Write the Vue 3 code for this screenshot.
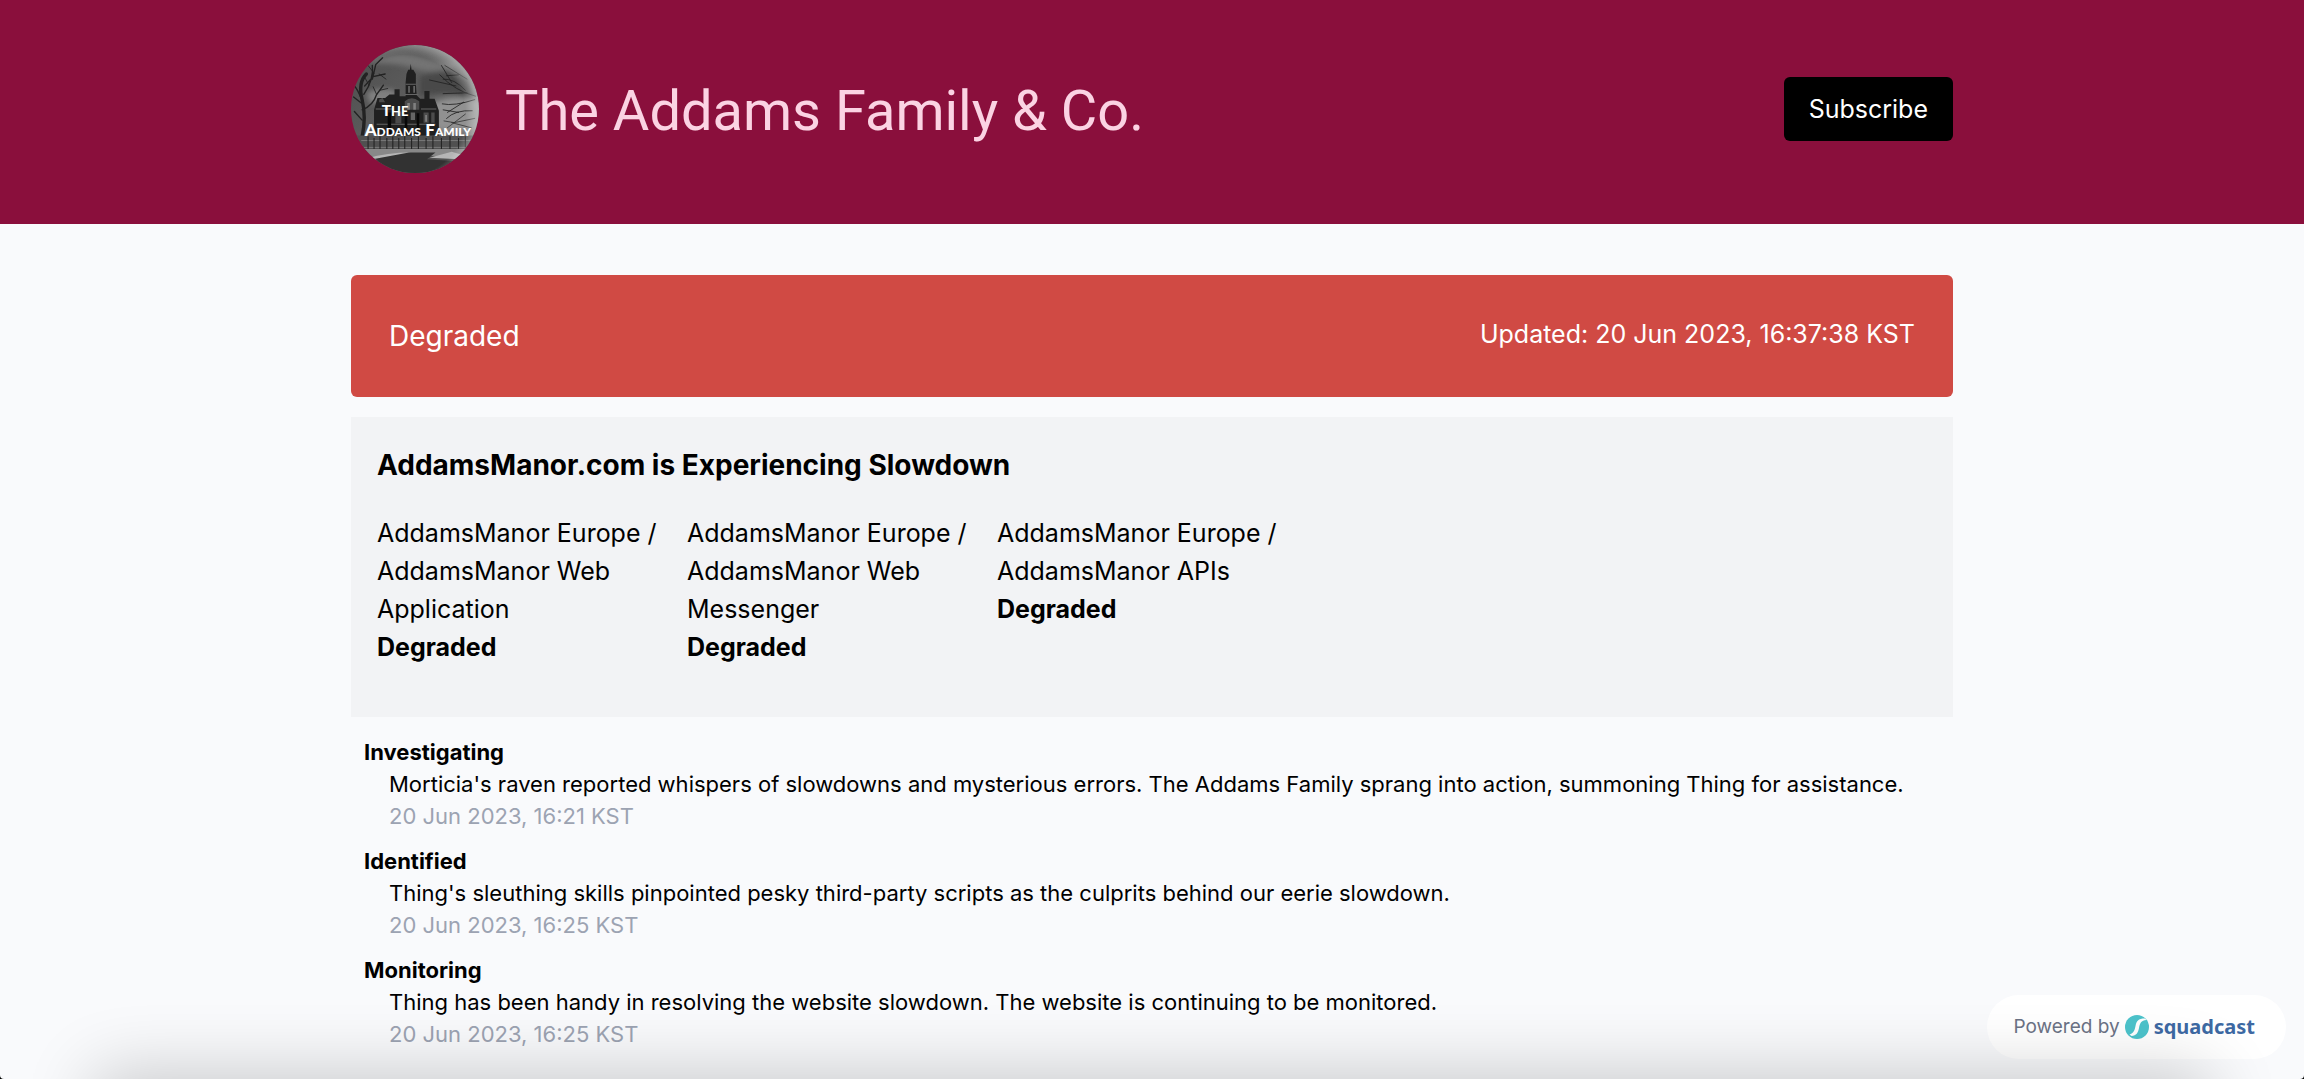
<script setup>
const components = [
  { name: 'AddamsManor Europe / AddamsManor Web Application', status: 'Degraded' },
  { name: 'AddamsManor Europe / AddamsManor Web Messenger', status: 'Degraded' },
  { name: 'AddamsManor Europe / AddamsManor APIs', status: 'Degraded' },
]

const updates = [
  {
    state: 'Investigating',
    text: "Morticia's raven reported whispers of slowdowns and mysterious errors. The Addams Family sprang into action, summoning Thing for assistance.",
    time: '20 Jun 2023, 16:21 KST',
  },
  {
    state: 'Identified',
    text: "Thing's sleuthing skills pinpointed pesky third-party scripts as the culprits behind our eerie slowdown.",
    time: '20 Jun 2023, 16:25 KST',
  },
  {
    state: 'Monitoring',
    text: 'Thing has been handy in resolving the website slowdown. The website is continuing to be monitored.',
    time: '20 Jun 2023, 16:25 KST',
  },
]
</script>

<template>
  <div class="page">
    <header class="header">
      <div class="container header-row">
        <div class="brand">
          <svg class="logo" viewBox="0 0 150 150" role="img" aria-label="The Addams Family">
            <defs>
              <clipPath id="disc"><circle cx="75" cy="75" r="75" /></clipPath>
              <linearGradient id="sky" x1="0" y1="0" x2="1" y2="1">
                <stop offset="0" stop-color="#4c4c4c" />
                <stop offset="0.5" stop-color="#5f5f5f" />
                <stop offset="1" stop-color="#8a8a8a" />
              </linearGradient>
              <radialGradient id="rim" cx="0.42" cy="0.55" r="0.58">
                <stop offset="0.82" stop-color="#fff" stop-opacity="0" />
                <stop offset="1" stop-color="#fff" stop-opacity="0.4" />
              </radialGradient>
              <filter id="soft" x="-20%" y="-20%" width="140%" height="140%">
                <feGaussianBlur stdDeviation="3" />
              </filter>
            </defs>
            <g clip-path="url(#disc)">
              <rect width="150" height="150" fill="url(#sky)" />
              <g filter="url(#soft)">
                <path d="M20 22q30-18 62-8t48 8q-30 14-54 6t-56-6z" fill="#737373" />
                <path d="M80 38q24-14 58 2l6 24q-30-12-64-4z" fill="#484848" />
                <path d="M96 68q24-10 54-2v34H100z" fill="#919191" />
                <path d="M18 56q18-8 34-2v14H22z" fill="#808080" />
              </g>
              <!-- mansion -->
              <path d="M27 112V76l4-14h9l5-4h6v-6h6v8h7V44l1-10 2-5h2l1-7 1 7h2l3 5v11l1 14 4 4h5v-9h6v9h6l5 14v37z" fill="#202020" />
              <path d="M64 46h12M63 58h16M29 75h20M82 75h18M30 93h69" stroke="#666" stroke-width="1.2" />
              <path d="M63 66q8-7 17 0v10H63zM52 78h7v14h-7zM85 79h6v12h-6zM94 79h4v12h-4zM33 64l4-2 3 5h-7z" fill="#4c4c4c" />
              <path d="M67 48h2v8h-2zM73 48h2v8h-2zM66 68h3v8h-3zM73 68h3v8h-3zM70 79h5v9h-5zM87 82h2v8h-2z" fill="#d0d0d0" opacity="0.4" />
              <path d="M63 80h3v24h-3zM77 80h3v24h-3zM43 79h4v26h-4z" fill="#080808" />
              <!-- bare trees -->
              <g fill="none" stroke="#222" stroke-linecap="round">
                <path d="M13 108q5-24 0-44T18 34" stroke-width="4" />
                <path d="M13 65Q7 50 3 47M15 58q12-18 10-34M13 76q13-5 17-18l8-11M16 48l10-11 14-3M25 40l4-17 8-8M4 78l9 10M3 61l9 7" stroke-width="1.6" />
                <path d="M30 58l-4-9M34 53l9-2M27 33l-7-9M33 34l8 6M21 47l-6-11" stroke-width="1" />
                <path d="M146 60q-24-6-42-25M134 53q-13-14-26-13M123 48l-31-7M118 44l-12-20M136 56l-28 1M145 64q-24 8-38 5M132 67l-19 12M136 40l-26-16M126 35l-14 1M142 77q-20-1-30 9M126 79l-18-3" stroke-width="1" />
                <path d="M145 86l-24 5-12-2M134 81l-21 16M141 97l-23-6" stroke-width="0.8" />
              </g>
              <!-- fence, lawn and driveway -->
              <path d="M0 106h150v44H0z" fill="#505050" />
              <path d="M12 112h128M15 120h120" stroke="#808080" />
              <path d="M20 107v15M27 109v13M34 107v15M42 109v13M49 107v15M56 109v13M63 107v15M71 109v13M79 107v15M88 109v13M96 107v15M106 109v13M116 107v15M126 109v13M134 107v13" stroke="#242424" stroke-width="1.3" />
              <path d="M8 122h132l-6 10-62-3q-26-3-34 4l-26-1z" fill="#888" />
              <path d="M18 133q25-7 52-7l-16 7-30 3zM92 132l26-7 17 5-8 4z" fill="#b5b5b5" />
              <path d="M19 135l49-9h31l-10 8 30 2-18 14H43z" fill="#323232" />
              <circle cx="75" cy="75" r="75" fill="url(#rim)" />
            </g>
            <g class="logo-text">
              <text x="36" y="83" font-size="18">T<tspan font-size="15">HE</tspan></text>
              <text x="16" y="107" font-size="20">A<tspan font-size="14">DDAMS</tspan></text>
              <text x="87" y="107" font-size="20">F<tspan font-size="14">AMILY</tspan></text>
            </g>
          </svg>
          <h1 class="title">The Addams Family &amp; Co.</h1>
        </div>
        <button class="subscribe" type="button">Subscribe</button>
      </div>
    </header>

    <main class="container main">
      <section class="banner">
        <span class="banner-status">Degraded</span>
        <span class="banner-time">Updated: 20 Jun 2023, 16:37:38 KST</span>
      </section>

      <section class="incident">
        <h2 class="incident-title">AddamsManor.com is Experiencing Slowdown</h2>
        <ul class="components">
          <li v-for="item in components" :key="item.name">
            {{ item.name }}
            <strong>{{ item.status }}</strong>
          </li>
        </ul>
      </section>

      <section class="updates">
        <article v-for="update in updates" :key="update.state" class="update">
          <h3>{{ update.state }}</h3>
          <p>{{ update.text }}</p>
          <time>{{ update.time }}</time>
        </article>
      </section>
    </main>

    <a class="powered" href="#">
      <span>Powered by</span>
      <svg class="mark" viewBox="0 0 24 24" aria-hidden="true">
        <circle cx="12" cy="12" r="12" fill="#4cc3cb" />
        <path d="M20 3.500C13 3.500 11.500 6 10.500 11C9.500 16 8.500 18 4.500 19.500L6.500 21C11.500 20.500 13 18 14 13C15 8 16 5.500 21.500 5Z" fill="#fff" />
      </svg>
      <span class="wordmark">squadcast</span>
    </a>
    <div class="edge-shadow" aria-hidden="true"></div>
  </div>
</template>

<style>
html {
  background: #000;
}
</style>

<style scoped>
.page {
  position: relative;
  min-height: 100vh;
  overflow: hidden;
  border-radius: 0 0 4px 4px;
  background: #f9fafc;
  color: #000;
  font-family: Inter, "Liberation Sans", sans-serif;
  font-size: 25px;
  line-height: 38px;
}

.container {
  box-sizing: border-box;
  width: 100%;
  max-width: 1602px;
  margin: 0 auto;
}

.header {
  background: #8a0f3c;
}

.header-row {
  display: flex;
  align-items: center;
  justify-content: space-between;
  min-height: 224px;
  padding-bottom: 6px;
}

.brand {
  display: flex;
  align-items: center;
  gap: 26px;
}

.logo {
  flex: none;
  width: 128px;
  height: 128px;
}

.logo-text {
  fill: #fff;
  font-family: Lato, sans-serif;
  font-weight: 900;
}

.title {
  margin: 0;
  padding-top: 4px;
  color: #fbd3e3;
  font-family: Roboto, Inter, sans-serif;
  font-size: 56px;
  font-weight: 400;
  line-height: 64px;
}

.subscribe {
  padding: 13px 25px;
  border: 0;
  border-radius: 6px;
  background: #000;
  color: #fff;
  font: inherit;
}

.main {
  padding-top: 51px;
}

.banner {
  display: flex;
  align-items: center;
  justify-content: space-between;
  padding: 38px;
  border-radius: 6px;
  background: #d04a44;
  color: #fff;
}

.banner-status {
  font-size: 28px;
  line-height: 46px;
}

.banner-time {
  padding-bottom: 4px;
}

.incident {
  margin-top: 20px;
  padding: 26px 26px 51px;
  background: #f2f3f5;
}

.incident-title {
  margin: 0 0 26px;
  font-size: 28px;
  font-weight: 700;
  line-height: 45px;
}

.components {
  display: grid;
  grid-template-columns: repeat(5, 1fr);
  margin: 0;
  padding: 0;
  list-style: none;
}

.components li {
  padding-right: 26px;
}

.components strong {
  display: block;
}

.updates {
  display: flex;
  flex-direction: column;
  gap: 13px;
  padding: 19px 13px 24px;
  font-size: 22px;
  line-height: 32px;
}

.update h3,
.update p {
  margin: 0;
  font-size: 22px;
}

.update h3 {
  font-weight: 700;
}

.update p,
.update time {
  display: block;
  padding-left: 25px;
}

.update time {
  color: #9ca3b2;
}

.powered {
  position: fixed;
  right: 18px;
  bottom: 20px;
  display: flex;
  align-items: center;
  gap: 5px;
  padding: 16px 31px 16px 26px;
  border-radius: 32px;
  background: #fff;
  color: #6b7285;
  font-size: 19px;
  line-height: 32px;
  text-decoration: none;
}

.mark {
  width: 24px;
  height: 24px;
}

.wordmark {
  color: #3d69a3;
  font-family: "Noto Sans", sans-serif;
  font-size: 20px;
  font-weight: 700;
}

.edge-shadow {
  position: fixed;
  top: 100%;
  left: 100px;
  right: 100px;
  height: 80px;
  box-shadow: 0 0 70px 6px rgba(0, 0, 0, 0.2);
  pointer-events: none;
}
</style>
